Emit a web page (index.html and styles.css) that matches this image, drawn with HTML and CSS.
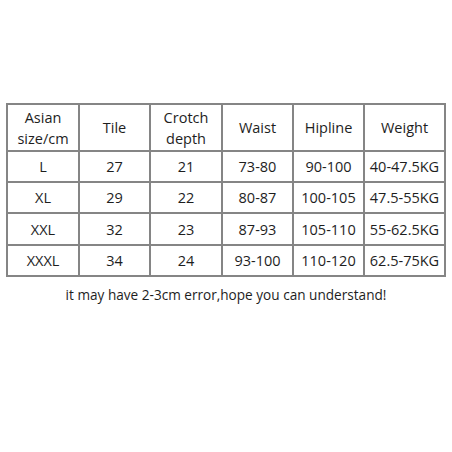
FILE: index.html
```html
<!DOCTYPE html>
<html>
<head>
<meta charset="utf-8">
<link rel="stylesheet" href="styles.css">
</head>
<body>
<div class="page">
  <table class="sizes">
    <colgroup>
      <col class="c1"><col class="c2"><col class="c3"><col class="c4"><col class="c5"><col class="c6">
    </colgroup>
    <tr class="head">
      <td>Asian<br>size/cm</td>
      <td>Tile</td>
      <td>Crotch<br>depth</td>
      <td>Waist</td>
      <td>Hipline</td>
      <td>Weight</td>
    </tr>
    <tr class="r1"><td>L</td><td>27</td><td>21</td><td>73-80</td><td>90-100</td><td>40-47.5KG</td></tr>
    <tr class="r2"><td>XL</td><td>29</td><td>22</td><td>80-87</td><td>100-105</td><td>47.5-55KG</td></tr>
    <tr class="r3"><td>XXL</td><td>32</td><td>23</td><td>87-93</td><td>105-110</td><td>55-62.5KG</td></tr>
    <tr class="r4"><td>XXXL</td><td>34</td><td>24</td><td>93-100</td><td>110-120</td><td>62.5-75KG</td></tr>
  </table>
  <p class="note">it may have 2-3cm error,hope you can understand!</p>
</div>
</body>
</html>
```

FILE: styles.css
```css
html, body {
  margin: 0;
  padding: 0;
  background: #fff;
}
.page {
  width: 452px;
  height: 452px;
  padding-top: 103px;
  box-sizing: border-box;
  font-family: "Open Sans", "Noto Sans", sans-serif;
  color: #1e1e1e;
}
.sizes {
  border-collapse: collapse;
  margin-left: 6px;
  width: 440px;
  table-layout: fixed;
  font-size: 14.5px;
}
.sizes td {
  border: 2px solid #858585;
  text-align: center;
  vertical-align: middle;
  padding: 0;
  line-height: 21px;
}
.c1 { width: 72px; }
.c2 { width: 71px; }
.c3 { width: 72px; }
.c4 { width: 71px; }
.c5 { width: 71px; }
.c6 { width: 81px; }
.head { height: 47px; }
.r1, .r2, .r4 { height: 31px; }
.r3 { height: 32px; }
.note {
  margin: 8px 0 0;
  text-align: center;
  font-size: 13.6px;
  line-height: 20px;
}
```
